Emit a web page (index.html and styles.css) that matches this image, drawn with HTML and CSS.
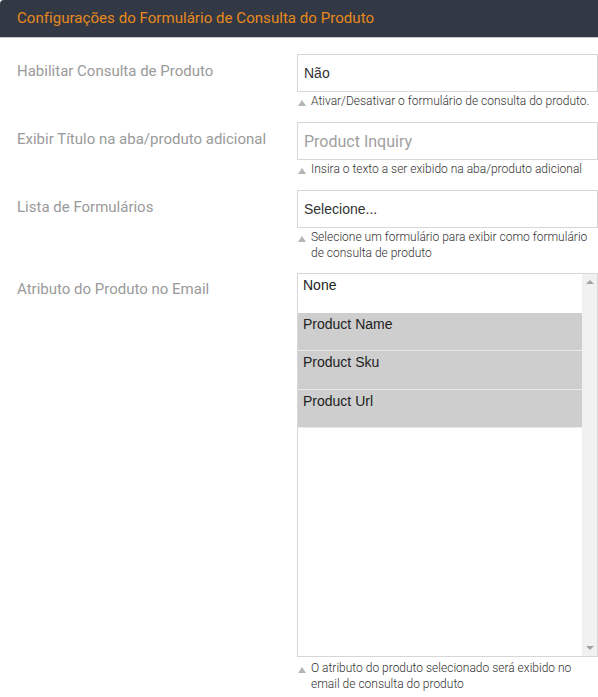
FILE: index.html
```html
<!DOCTYPE html>
<html lang="pt">
<head>
<meta charset="utf-8">
<title>Configurações do Formulário de Consulta do Produto</title>
<link rel="stylesheet" href="styles.css">
</head>
<body>
<section class="panel">
  <header class="panel-head">Configurações do Formulário de Consulta do Produto</header>
  <div class="panel-body">
    <div class="row">
      <label class="label">Habilitar Consulta de Produto</label>
      <div class="control">
        <div class="input">Não</div>
        <p class="note"><span class="tri"></span>Ativar/Desativar o formulário de consulta do produto.</p>
      </div>
    </div>
    <div class="row">
      <label class="label">Exibir Título na aba/produto adicional</label>
      <div class="control">
        <div class="input placeholder">Product Inquiry</div>
        <p class="note"><span class="tri"></span>Insira o texto a ser exibido na aba/produto adicional</p>
      </div>
    </div>
    <div class="row">
      <label class="label">Lista de Formulários</label>
      <div class="control">
        <div class="input">Selecione...</div>
        <p class="note"><span class="tri"></span>Selecione um formulário para exibir como formulário de consulta de produto</p>
      </div>
    </div>
    <div class="row">
      <label class="label label-tight">Atributo do Produto no Email</label>
      <div class="control">
        <div class="listbox">
          <div class="options">
            <div class="opt">None</div>
            <div class="opt sel">Product Name</div>
            <div class="opt sel">Product Sku</div>
            <div class="opt sel">Product Url</div>
          </div>
          <div class="scrollbar">
            <span class="arrow up"></span>
            <span class="arrow down"></span>
          </div>
        </div>
        <p class="note note-list"><span class="tri"></span>O atributo do produto selecionado será exibido no email de consulta do produto</p>
      </div>
    </div>
  </div>
</section>
</body>
</html>
```
FILE: styles.css
```css
* { box-sizing: border-box; }
html, body { margin: 0; padding: 0; background: #fff; }
body { font-family: Roboto, "Liberation Sans", Arial, sans-serif; }

.panel-head {
  height: 38px;
  background: #333845;
  color: #e8891c;
  font-size: 15px;
  letter-spacing: 0.05px;
  line-height: 20px;
  padding: 8px 17px 0;
  border-top-left-radius: 4px;
  border-bottom: 1px solid #c8ccd1;
}

.panel-body {
  padding: 16px 0 0 17px;
  display: flex;
  flex-direction: column;
  gap: 13px;
}

.row {
  display: grid;
  grid-template-columns: 280px 301px;
}

.label {
  color: #9a9a9a;
  font-size: 15px;
  line-height: 20px;
  padding-top: 7px;
}
.label-tight { padding-top: 5px; }

.control { display: flex; flex-direction: column; }

.input {
  height: 38px;
  border: 1px solid #d6d6d6;
  padding: 0 6px;
  display: flex;
  align-items: center;
  font-family: "Liberation Sans", Arial, sans-serif;
  font-size: 14px;
  color: #333;
}
.input.placeholder {
  font-family: Roboto, sans-serif;
  font-size: 16px;
  color: #a0a0a0;
}

.note {
  margin: 1px 0 0;
  position: relative;
  padding-left: 14px;
  font-size: 12px;
  font-weight: 300;
  line-height: 16px;
  color: #333;
}
.note-list { margin-top: 3px; }
.tri {
  position: absolute;
  left: 1px;
  top: 7px;
  width: 0; height: 0;
  border-left: 4px solid transparent;
  border-right: 4px solid transparent;
  border-bottom: 6px solid #b5b5b5;
}

.listbox {
  height: 384px;
  margin-top: -1px;
  border: 1px solid #d6d6d6;
  display: flex;
}
.options { flex: 1; }
.opt {
  height: 38.5px;
  padding: 3px 5px;
  font-family: "Liberation Sans", Arial, sans-serif;
  font-size: 14px;
  line-height: 17px;
  color: #222;
  border-bottom: 1px solid #e8e8e8;
}
.opt:first-child { border-bottom-color: #fff; }
.opt.sel { background: #cecece; }

.scrollbar {
  width: 15px;
  background: #f1f1f1;
  display: flex;
  flex-direction: column;
  justify-content: space-between;
  align-items: center;
  padding: 6px 0;
}
.arrow { width: 0; height: 0; border-left: 4px solid transparent; border-right: 4px solid transparent; }
.arrow.up { border-bottom: 4px solid #a3a3a3; }
.arrow.down { border-top: 4px solid #a3a3a3; }
```
